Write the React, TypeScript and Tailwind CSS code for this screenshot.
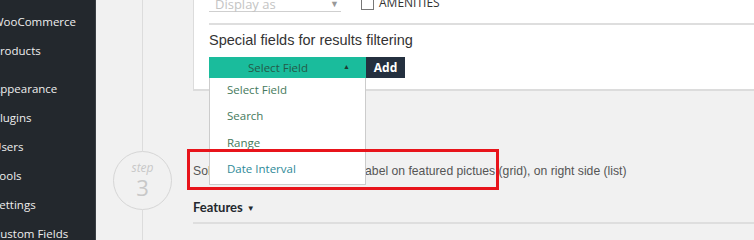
import React from 'react';

const menu = [
  { label: 'WooCommerce', gap: false },
  { label: 'Products', gap: false },
  { label: 'Appearance', gap: true },
  { label: 'Plugins', gap: false },
  { label: 'Users', gap: false },
  { label: 'Tools', gap: false },
  { label: 'Settings', gap: false },
  { label: 'Custom Fields', gap: false },
];

const options = ['Select Field', 'Search', 'Range', 'Date Interval'];

export default function App() {
  return (
    <div className="flex w-[754px] h-[240px] overflow-hidden bg-[#f1f1f1]">
      {/* Sidebar */}
      <div className="w-[96px] shrink-0 bg-[#23282d] border-r border-[#3a3f44] pt-[12px] overflow-hidden">
        {menu.map((item) => (
          <div
            key={item.label}
            className={`h-[29px] ml-[-7px] whitespace-nowrap text-[11.5px] leading-[20px] text-[#eeeeee] font-['Open_Sans',sans-serif] ${
              item.gap ? 'mt-[9px]' : ''
            }`}
          >
            {item.label}
          </div>
        ))}
      </div>

      {/* Step column */}
      <div className="w-[97px] shrink-0 flex flex-col pl-[17px]">
        <div className="w-[59px] flex flex-col items-center h-full">
          <div className="w-px h-[151px] bg-[#dcdcdc]" />
          <div className="w-[59px] h-[59px] shrink-0 rounded-full border border-[#d6d6d6] flex flex-col items-center justify-center font-['Open_Sans',sans-serif] text-[#c8c8c8]">
            <span className="text-[12px] italic leading-[14px] mt-[-2px]">step</span>
            <span className="text-[22px] leading-[24px]">3</span>
          </div>
          <div className="w-px flex-1 bg-[#dcdcdc]" />
        </div>
      </div>

      {/* Main */}
      <div className="flex-1 relative">
        <div className="h-[91px] flex flex-col bg-white border-l border-b-2 border-[#dcdcdc] pl-[15px]">
          <div className="flex items-start gap-5 mt-[-4px] h-[16px]">
            <div className="w-[132px] h-[16px] border-b border-[#cfcfcf] flex items-center justify-between pl-[6px] pr-[2px] text-[13px] text-[#c4c4c4] font-['Open_Sans',sans-serif]">
              <span className="leading-[14px]">Display as</span>
              <span className="text-[9px] text-[#999]">▼</span>
            </div>
            <div className="flex items-center gap-[5px]">
              <div className="w-[13px] h-[14px] border border-[#777] bg-white mt-[-1px]" />
              <span className="text-[12px] leading-[14px] text-[#333] font-['Open_Sans',sans-serif]">AMENITIES</span>
            </div>
          </div>
          <div className="mt-[11px] border-t-2 border-[#dedede]" />
          <div className="mt-[5px] text-[14.5px] leading-[20px] text-[#333] font-['Liberation_Sans',Arial,sans-serif]">
            Special fields for results filtering
          </div>
          <div className="mt-[7px] flex relative w-fit">
            <div className="w-[157px] h-[21px] bg-[#1abc9c] flex items-center pl-[39px] pr-[16px] justify-between text-[11.5px] text-[#245a48] font-['Open_Sans',sans-serif]">
              <span>Select Field</span>
              <span className="text-[7px] text-[#1f3a33]">▲</span>
            </div>
            <button className="w-[39px] h-[21px] bg-[#24303f] text-white text-[12px] font-bold font-['Open_Sans',sans-serif]">
              Add
            </button>
            <div className="absolute left-0 top-[21px] w-[157px] h-[107px] bg-white border border-t-0 border-[#cccccc] z-10 font-['Open_Sans',sans-serif]">
              <div className="mt-[-2px]">
                {options.map((opt) => (
                  <div
                    key={opt}
                    className={`pl-[17px] h-[26.5px] flex items-center text-[11.5px] ${
                      opt === 'Date Interval' ? 'text-[#2e8a98]' : 'text-[#457a5c]'
                    }`}
                  >
                    {opt}
                  </div>
                ))}
              </div>
            </div>
          </div>
        </div>

        <div className="mt-[70px] h-[20px] flex items-center text-[12.2px] text-[#555] font-['Liberation_Sans',Arial,sans-serif] whitespace-nowrap">
          Sold / Rented status set as the label on featured pictues (grid), on right side (list)
        </div>

        <div className="mt-[18px] h-[18px] flex items-center gap-[4px] text-[13px] font-bold text-[#23282d] font-['Lato',sans-serif]">
          <span>Features</span>
          <span className="text-[8px]">▼</span>
        </div>
        <div className="mt-[5px] border-t-2 border-[#dedede]" />

        {/* annotation */}
        <div className="absolute left-[-6px] top-[149px] w-[312px] h-[41px] border-[3px] border-[#e8141b] z-20" />
      </div>
    </div>
  );
}
